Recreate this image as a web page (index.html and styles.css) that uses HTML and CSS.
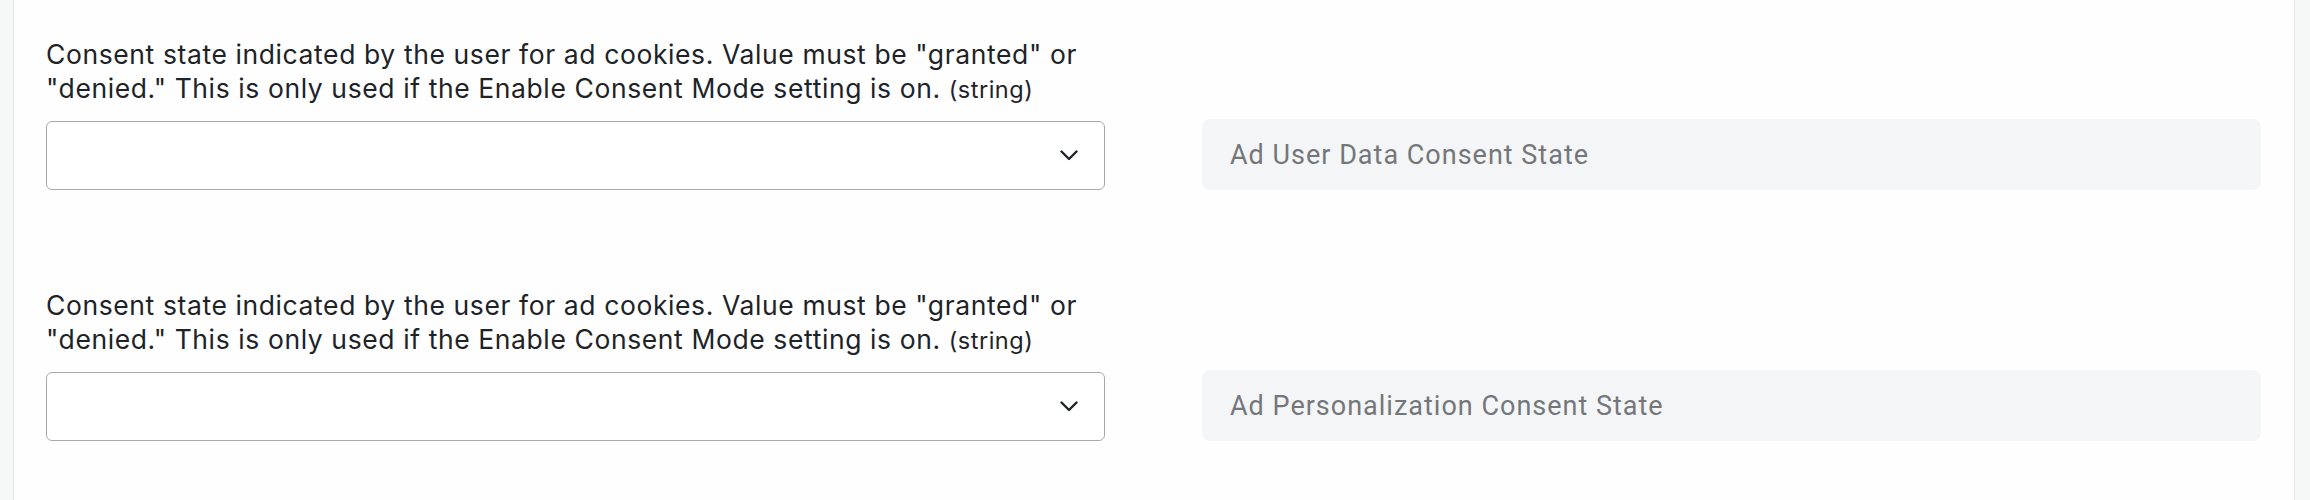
FILE: index.html
```html
<!DOCTYPE html>
<html lang="en">
<head>
<meta charset="utf-8">
<title>Consent settings</title>
<link rel="stylesheet" href="styles.css">
</head>
<body>
<div class="page">
  <aside class="strip strip-left"></aside>
  <main class="panel">
    <div class="row">
      <div class="field">
        <p class="label">Consent state indicated by the user for ad cookies. Value must be "granted" or "denied." This is only used if the Enable Consent Mode setting is on. <span class="type">(string)</span></p>
        <div class="select">
          <svg class="chev" width="18" height="11" viewBox="0 0 18 11"><polyline points="1.5,1.5 9,9 16.5,1.5" fill="none" stroke="#1d2327" stroke-width="2.4" stroke-linecap="round" stroke-linejoin="round"/></svg>
        </div>
      </div>
      <div class="input">Ad User Data Consent State</div>
    </div>
    <div class="row">
      <div class="field">
        <p class="label">Consent state indicated by the user for ad cookies. Value must be "granted" or "denied." This is only used if the Enable Consent Mode setting is on. <span class="type">(string)</span></p>
        <div class="select">
          <svg class="chev" width="18" height="11" viewBox="0 0 18 11"><polyline points="1.5,1.5 9,9 16.5,1.5" fill="none" stroke="#1d2327" stroke-width="2.4" stroke-linecap="round" stroke-linejoin="round"/></svg>
        </div>
      </div>
      <div class="input">Ad Personalization Consent State</div>
    </div>
  </main>
  <aside class="strip strip-right"></aside>
</div>
</body>
</html>
```
FILE: styles.css
```css
html, body {
  margin: 0;
  padding: 0;
  background: #ffffff;
}
.page {
  display: flex;
  height: 500px;
  overflow: hidden;
}
.strip {
  background: #f6f7f7;
  flex: none;
}
.strip-left {
  width: 13px;
  border-right: 1px solid #e6e8e9;
}
.strip-right {
  width: 15px;
  border-left: 1px solid #e6e8e9;
}
.panel {
  flex: 1;
  display: flex;
  flex-direction: column;
  gap: 98px;
  padding: 37px 33px 0 32px;
  background: #fefefe;
}
.row {
  display: grid;
  grid-template-columns: 1fr 1fr;
  column-gap: 97px;
  align-items: end;
}
.label {
  margin: 0;
  font-family: Inter, "Liberation Sans", sans-serif;
  font-size: 26.5px;
  line-height: 34px;
  color: #1d2327;
  letter-spacing: 0.6px;
}
.type {
  font-size: 23.5px;
  letter-spacing: 0.5px;
  line-height: 1;
}
.select {
  margin-top: 16px;
  height: 67px;
  border: 1.5px solid #a3abad;
  border-radius: 6px;
  display: flex;
  align-items: center;
  justify-content: flex-end;
  padding-right: 26px;
  background: #ffffff;
}
.chev {
  display: block;
}
.input {
  height: 71px;
  border-radius: 8px;
  background: #f4f5f7;
  display: flex;
  align-items: center;
  padding-left: 28px;
  font-family: Roboto, "Liberation Sans", sans-serif;
  font-size: 27px;
  letter-spacing: 1px;
  color: #74777a;
}
```
